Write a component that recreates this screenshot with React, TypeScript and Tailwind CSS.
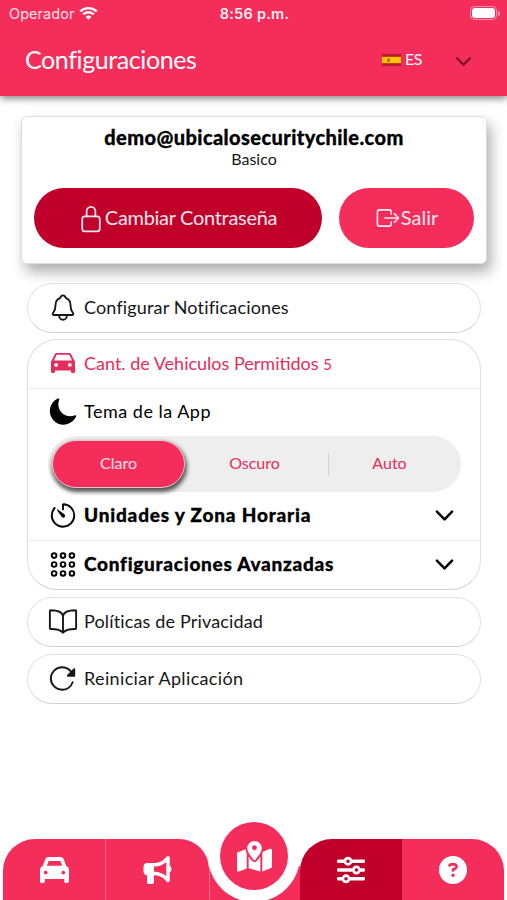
import { useState } from "react";
import type { ReactNode } from "react";
import {
  IoAppsOutline,
  IoBookOutline,
  IoChevronDown,
  IoExitOutline,
  IoLockClosedOutline,
  IoMoon,
  IoNotificationsOutline,
  IoReload,
  IoTimerOutline,
} from "react-icons/io5";
import { FaBullhorn, FaCircleQuestion, FaMapLocationDot } from "react-icons/fa6";

type RowProps = {
  icon: ReactNode;
  children: ReactNode;
  className?: string;
};

function Row({ icon, children, className = "" }: RowProps) {
  return (
    <div className={`flex items-center pb-0.5 pl-[20px] pr-5 text-[18px] ${className}`}>
      <span className="flex w-[30px] shrink-0 justify-center text-[31px]">{icon}</span>
      <span className="ml-1.5 flex flex-1 items-center justify-between whitespace-nowrap">{children}</span>
    </div>
  );
}

function StatusBar() {
  return (
    <div className="grid h-7 grid-cols-3 items-center pl-[9px] pr-[7px] font-['Inter'] text-[14.5px] text-white/85">
      <div className="flex items-center gap-[5px]">
        <span className="tracking-[0.05px]">Operador</span>
        <svg className="-mt-0.5 h-[15px] w-[19px]" viewBox="0 0 20 15" fill="none" stroke="white" strokeWidth="2.5">
          <path d="M1.4 5.4a12.2 12.2 0 0 1 17.2 0M4.4 8.5a8 8 0 0 1 11.2 0" />
          <path d="M7 11.1a4.3 4.3 0 0 1 6 0L10 14Z" fill="white" stroke="none" />
        </svg>
      </div>
      <span className="text-center font-semibold tracking-[0.25px] text-white/95">8:56 p.m.</span>
      <div className="flex items-center justify-end gap-px">
        <div className="-mt-0.5 h-[14px] w-[27px] rounded-[4.5px] border border-white/50 p-px">
          <div className="h-full rounded-[3px] bg-white" />
        </div>
        <div className="-mt-0.5 h-[5px] w-[2px] rounded-r bg-white/50" />
      </div>
    </div>
  );
}

function Flag() {
  return (
    <svg className="h-3 w-[19px]" viewBox="0 0 19 12">
      <path fill="#b71c2b" d="M0 0h19v12H0z" />
      <path fill="#fcc400" d="M0 2.8h19v6.4H0z" />
      <path fill="#a5662b" d="M5 5.5 6.5 4 8 5.5v2.3H5z" />
    </svg>
  );
}

function ListCar() {
  return (
    <svg className="h-5 w-6" viewBox="0 0 24 20" fill="currentColor" fillRule="evenodd">
      <path d="M5.600 0h12.800c.9 0 1.500.4 1.800 1.200L23.600 8c.3.5.4 1 .4 1.600v9.200c0 .7-.5 1.200-1.200 1.200h-1.600c-.7 0-1.200-.5-1.200-1.200v-1.300H4v1.300c0 .7-.5 1.200-1.200 1.200H1.200C.5 20 0 19.500 0 18.800V9.600C0 9 .1 8.500.4 8l3.400-6.800C4.100.4 4.700 0 5.600 0Zm.1 1.700L3 7.500h18l-2.700-5.800ZM5.200 10a1.900 1.900 0 1 0 0 3.800 1.900 1.900 0 0 0 0-3.800Zm13.600 0a1.900 1.900 0 1 0 0 3.800 1.900 1.900 0 0 0 0-3.800Z" />
    </svg>
  );
}

function TabCar() {
  return (
    <svg className="h-[26px] w-[29px]" viewBox="0 0 29 26" fill="currentColor" fillRule="evenodd">
      <path d="M8.5 0h12c1.500 0 2.700.8 3.200 2.200L26.300 9c1.700.7 2.700 2.100 2.700 3.900v11.300c0 1-.8 1.800-1.800 1.800H26c-1 0-1.800-.8-1.800-1.800V22H4.800v2.200C4.800 25.200 4 26 3 26H1.800C.8 26 0 25.200 0 24.200V12.900C0 11.100 1 9.700 2.700 9l2.600-6.800C5.800.8 7 0 8.500 0Zm.2 3.900L6.800 8.800h15.400l-1.900-4.900ZM5.700 13.700a1.900 1.900 0 1 0 0 3.800 1.900 1.900 0 0 0 0-3.800Zm17.600 0a1.900 1.900 0 1 0 0 3.800 1.900 1.900 0 0 0 0-3.800Z" />
    </svg>
  );
}

function Sliders() {
  return (
    <svg className="h-7 w-7" viewBox="0 0 28 28" fill="none" stroke="white" strokeWidth="3.4" strokeLinecap="round">
      <path d="M1.5 5.2h5M15.5 5.2h11M1.5 14h13M23.5 14h3M1.5 22.8h3M13.5 22.8h13" />
      <g strokeWidth="2.7">
        <circle cx="11" cy="5.2" r="3.1" />
        <circle cx="19.4" cy="14" r="3.1" />
        <circle cx="9" cy="22.8" r="3.1" />
      </g>
    </svg>
  );
}

function ThemeSwitch() {
  const [theme, setTheme] = useState("Claro");
  return (
    <div className="ml-5 mr-[19px] grid h-14 shrink-0 grid-cols-3 rounded-full bg-[#eeeeee] p-1 text-[16px] text-[#e42d5b]">
      {["Claro", "Oscuro", "Auto"].map((name) => (
        <button
          key={name}
          type="button"
          onClick={() => setTheme(name)}
          className={
            name === theme
              ? "mr-[2px] rounded-full border border-[#e9c5cc] bg-[#f42d5b] pb-0.5 text-white/85 shadow-[1px_3px_4px_1px_#555]"
              : "relative flex items-center justify-center pb-0.5"
          }
        >
          {name === "Auto" && <span className="absolute left-[6px] top-[13px] h-[23px] w-px bg-[#d0d0d0]" />}
          {name}
        </button>
      ))}
    </div>
  );
}

function TabBar() {
  return (
    <nav className="relative grid h-[61px] grid-cols-[103px_103px_91px_102px_102px] items-end pl-[3px] text-white">
      <a className="flex h-full items-center justify-center rounded-tl-[32px] border-r border-[#f96c8c] bg-[#f42d5b]">
        <TabCar />
      </a>
      <a className="flex h-full items-center justify-center rounded-tr-[30px] bg-[#f42d5b]">
        <FaBullhorn className="h-[28px] w-[29px]" />
      </a>
      <span className="h-[34px] border-l border-[#f96c8c] bg-[#f42d5b]" />
      <a className="flex h-full items-center justify-center rounded-tl-[32px] bg-[#c0002b]">
        <Sliders />
      </a>
      <a className="flex h-full items-center justify-center rounded-tr-[32px] bg-[#f42d5b]">
        <FaCircleQuestion className="h-[28px] w-[28px]" />
      </a>
      <a className="absolute -top-[29px] left-[208px] flex h-[92px] w-[92px] items-center justify-center rounded-full bg-white">
        <span className="flex h-[68px] w-[68px] items-center justify-center rounded-full bg-[#f42d5b]">
          <FaMapLocationDot className="h-[33px] w-[35px]" />
        </span>
      </a>
    </nav>
  );
}

const box = "border border-[#e0e0e0] border-b-[#d2d2d2] bg-white";

export default function App() {
  return (
    <div className="flex h-[900px] w-[507px] flex-col overflow-hidden bg-white font-['Lato',sans-serif] text-[#161616]">
      <header className="h-24 shrink-0 bg-[#f42d5b] text-white shadow-[0_2px_8px_rgba(0,0,0,0.55)]">
        <StatusBar />
        <div className="flex h-[64px] items-center pl-[25px] pr-[34px]">
          <h1 className="text-[25px] tracking-[-0.4px]">Configuraciones</h1>
          <div className="ml-auto flex items-center gap-1 text-[16px]">
            <Flag />
            <span className="-mt-0.5 tracking-[-0.5px]">ES</span>
            <IoChevronDown className="-mr-0.5 ml-[26px] mt-0.5 h-[23px] w-[23px] text-[#780c28]" />
          </div>
        </div>
      </header>

      <main className="flex flex-1 flex-col">
        <section className="ml-[21px] mr-5 mt-5 h-[148px] rounded-[6px] border border-[#dddddd] bg-white px-3 pt-2 text-center shadow-[4px_8px_14px_rgba(0,0,0,0.32)]">
          <p className="text-[20px] font-black leading-6 tracking-[0.4px] text-black [-webkit-text-stroke:0.3px]">
            demo@ubicalosecuritychile.com
          </p>
          <p className="text-[16px] leading-5">Basico</p>
          <div className="mt-[19px] flex gap-[17px] text-[20px] text-white/90">
            <button
              type="button"
              className="flex h-[60px] w-[288px] items-center justify-center rounded-full bg-[#c0002b] pb-0.5 pr-0.5 tracking-[-0.3px]"
            >
              <IoLockClosedOutline className="mt-1 h-7 w-7" />
              Cambiar Contraseña
            </button>
            <button
              type="button"
              className="flex h-[60px] w-[135px] items-center justify-center rounded-full bg-[#f42d5b] pb-0.5"
            >
              <IoExitOutline className="mt-0.5 h-[26px] w-[26px]" />
              Salir
            </button>
          </div>
        </section>

        <div className="ml-[27px] mr-[26px] mt-[19px] flex flex-col gap-[7px]">
          <Row className={`h-[50px] rounded-full ${box}`} icon={<IoNotificationsOutline />}>
            <span className="tracking-[0.15px]">Configurar Notificaciones</span>
          </Row>

          <section className={`-mt-px flex h-[251px] flex-col rounded-[30px] ${box}`}>
            <Row className="h-[49px] border-b border-[#eeeeee] text-[#e42d5b]" icon={<ListCar />}>
              <span>
                Cant. de Vehiculos Permitidos <span className="text-[15px]">5</span>
              </span>
            </Row>
            <Row className="h-[47px] text-black" icon={<IoMoon />}>
              <span className="tracking-[0.5px]">Tema de la App</span>
            </Row>
            <ThemeSwitch />
            <Row className="h-[49px] border-b border-[#eeeeee] font-black text-black" icon={<IoTimerOutline />}>
              <span className="text-[19px] tracking-[0.8px] [-webkit-text-stroke:0.3px]">Unidades y Zona Horaria</span>
              <IoChevronDown className="mr-0.5 h-[27px] w-[27px]" />
            </Row>
            <Row className="h-[48px] font-black text-black" icon={<IoAppsOutline />}>
              <span className="text-[19px] tracking-[0.72px] [-webkit-text-stroke:0.3px]">Configuraciones Avanzadas</span>
              <IoChevronDown className="mr-0.5 h-[27px] w-[27px]" />
            </Row>
          </section>

          <Row className={`h-[50px] rounded-full ${box}`} icon={<IoBookOutline />}>
            <span className="tracking-[0.15px]">Políticas de Privacidad</span>
          </Row>
          <Row className={`h-[50px] rounded-full ${box}`} icon={<IoReload />}>
            <span className="tracking-[0.35px]">Reiniciar Aplicación</span>
          </Row>
        </div>
      </main>

      <TabBar />
    </div>
  );
}
